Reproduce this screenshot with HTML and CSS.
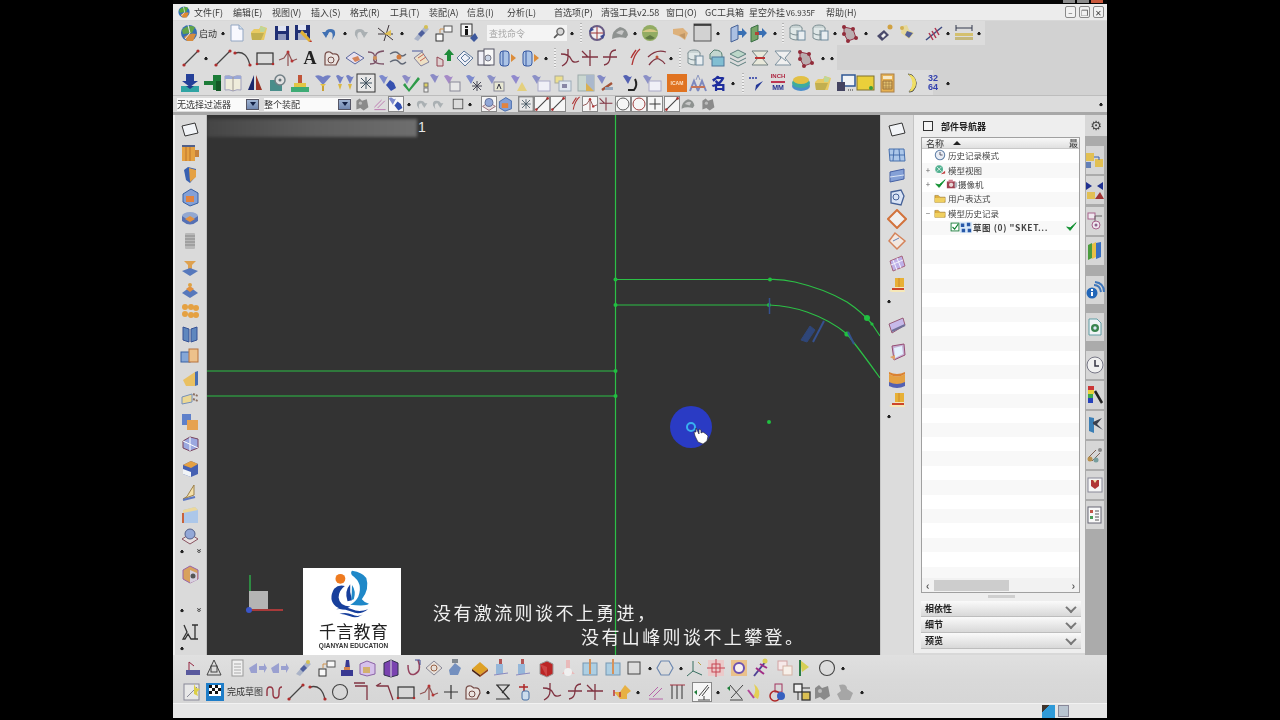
FILE: index.html
```html
<!DOCTYPE html>
<html lang="zh">
<head>
<meta charset="utf-8">
<title>NX</title>
<link rel="stylesheet" href="styles.css">
</head>
<body>
<svg class="sprite" xmlns="http://www.w3.org/2000/svg">
<symbol id="nx" viewBox="0 0 20 20"><circle cx="10" cy="10" r="8" fill="#2f6fc0"/><path d="M3 7q6-6 13-3l-3 6-9 1z" fill="#5aa83c"/><path d="M5 14q6-5 12-3l-3 7H8z" fill="#e08a30"/><path d="M9 2l2 8-5 6" stroke="#e8e8f8" fill="none"/></symbol>
<symbol id="doc" viewBox="0 0 20 20"><path d="M4 2h8l4 4v12H4z" fill="#f8f8ff" stroke="#8fa6c8"/><path d="M12 2v4h4" fill="#cfe0f0" stroke="#8fa6c8"/></symbol>
<symbol id="fold" viewBox="0 0 20 20"><path d="M2 9l3-3h5l2-3 6 2-3 12H3z" fill="#eeca50"/><path d="M2 10h13l-3 7H3z" fill="#c6b040"/><path d="M11 3l6 2-2 4h-4z" fill="#bcd890"/></symbol>
<symbol id="save" viewBox="0 0 20 20"><rect x="3" y="3" width="14" height="14" fill="#1d2f80"/><rect x="6" y="3" width="8" height="5" fill="#dfe4f4"/><rect x="6" y="11" width="8" height="6" fill="#8d98c4"/></symbol>
<symbol id="saveas" viewBox="0 0 20 20"><rect x="2" y="2" width="15" height="15" fill="#1d2f80"/><rect x="5" y="2" width="8" height="5" fill="#dfe4f4"/><rect x="5" y="10" width="9" height="7" fill="#a8b0d0"/><path d="M9 7l9 10-2 2-9-9z" fill="#e8b020"/><path d="M16 19l2-2 1 2z" fill="#d03020"/></symbol>
<symbol id="undo" viewBox="0 0 20 20"><path d="M5 11q0-5 6-5 5 0 4 6l-3 5q2-8-2-8-2 0-2 3z" fill="#3a72c0"/><path d="M2 9l7 0-3 6z" fill="#3a72c0"/></symbol>
<symbol id="redo" viewBox="0 0 20 20"><path d="M15 11q0-5-6-5-5 0-4 6l3 5q-2-8 2-8 2 0 2 3z" fill="#a9b0b4"/><path d="M18 9h-7l3 6z" fill="#a9b0b4"/></symbol>
<symbol id="snap" viewBox="0 0 20 20"><path d="M2 5l15 12M8 18L13 2M2 11h15" stroke="#40363a" fill="none"/><path d="M8 11l7-4v6z" fill="#e8c040"/></symbol>
<symbol id="pen" viewBox="0 0 20 20"><path d="M3 16L14 3l4 3L7 18z" fill="#aab4cc"/><path d="M7 11l4-4 3 3-4 4z" fill="#4a5fa8"/><circle cx="15" cy="4" r="2" fill="#d8c040"/></symbol>
<symbol id="cop" viewBox="0 0 20 20"><rect x="2" y="11" width="7" height="7" fill="#f8f8f8" stroke="#333"/><rect x="10" y="3" width="8" height="6" fill="#f8f8f8" stroke="#555"/><path d="M6 10V6h4" stroke="#d89040" fill="none"/></symbol>
<symbol id="info" viewBox="0 0 20 20"><rect x="2" y="1" width="11" height="12" fill="#f4f4f4" stroke="#333"/><rect x="6" y="3" width="3" height="2" fill="#111"/><rect x="6" y="6" width="3" height="6" fill="#111"/><path d="M11 15l5-5 3 5-4 4z" fill="#3858a8"/></symbol>
<symbol id="mag" viewBox="0 0 20 20"><circle cx="12" cy="8" r="5" fill="#d8d8d8" stroke="#666" stroke-width="2"/><path d="M8 12l-5 5" stroke="#555" stroke-width="2.5"/></symbol>
<symbol id="orb" viewBox="0 0 20 20"><circle cx="10" cy="10" r="7" fill="#f0f0f4" stroke="#6a5a8a" stroke-width="2"/><path d="M10 4v12M4 10h12" stroke="#b03030"/><path d="M2 9l2-5 3 3zM18 11l-2 5-3-3z" fill="#3a4aa0"/></symbol>
<symbol id="shd" viewBox="0 0 20 20"><path d="M2 16q0-9 8-12 7 1 8 8l-2 3q-8-2-14 1z" fill="#8e9290"/><path d="M6 10q4-4 8-2l-2 4z" fill="#c8c8c8"/></symbol>
<symbol id="sph" viewBox="0 0 20 20"><circle cx="10" cy="10" r="8" fill="#8fae58"/><path d="M2 9q8-6 16 0z" fill="#d8c878"/><path d="M5 15q5 3 10 0l-5-3z" fill="#5d7c3c"/></symbol>
<symbol id="blob" viewBox="0 0 20 20"><path d="M3 6l10-1 5 5-3 7-6-4-6-2z" fill="#e4b070"/><path d="M9 12l6-2 0 6z" fill="#c8965c"/></symbol>
<symbol id="gbox" viewBox="0 0 20 20"><rect x="1" y="1" width="17" height="17" fill="#d2d2d2" stroke="#555"/><path d="M1 2h17" stroke="#222" stroke-width="1.5"/></symbol>
<symbol id="door" viewBox="0 0 20 20"><path d="M3 5l7-3v14l-7 3z" fill="#a8c0e8" stroke="#4060a0"/><path d="M10 8h4V5l5 5-5 5v-3h-4z" fill="#3070c0"/></symbol>
<symbol id="doorg" viewBox="0 0 20 20"><path d="M2 5l7-3v14l-7 3z" fill="#70a860" stroke="#307040"/><path d="M9 8h4V5l5 5-5 5v-3H9z" fill="#3070c0"/><path d="M6 9h4v3H6z" fill="#c04030"/></symbol>
<symbol id="stk" viewBox="0 0 20 20"><ellipse cx="9" cy="5" rx="6" ry="3" fill="#c8d4d4" stroke="#7a8f94"/><path d="M3 5v10q6 4 12 0V5" fill="#dfe8e8" stroke="#7a8f94"/><path d="M3 10q6 4 12 0M10 7v10" stroke="#7a8f94" fill="none"/><rect x="11" y="8" width="7" height="9" fill="#e8eef2" stroke="#6a8aa0"/></symbol>
<symbol id="net" viewBox="0 0 20 20"><path d="M4 4l9 2 3 9-8 3-4-7z" fill="#bcaeb0" stroke="#a03048"/><g fill="#a02838"><circle cx="4" cy="4" r="2"/><circle cx="13" cy="6" r="2"/><circle cx="16" cy="15" r="2"/><circle cx="8" cy="18" r="2"/><circle cx="4" cy="11" r="2"/></g></symbol>
<symbol id="gem" viewBox="0 0 20 20"><path d="M2 13l7-6 5 5-7 6z" fill="#4a4a70"/><path d="M6 13l3-3 2 2-3 3z" fill="#f0f0f0"/><circle cx="15" cy="4" r="2.5" fill="#d8a030"/></symbol>
<symbol id="gem2" viewBox="0 0 20 20"><path d="M5 3l5-1 2 5 5 3-5 6-8-6z" fill="#e8d890"/><path d="M10 8l6 2-4 5-4-3z" fill="#5060a0"/><circle cx="5" cy="5" r="2" fill="#d8b040"/></symbol>
<symbol id="spr" viewBox="0 0 20 20"><path d="M2 17L18 4" stroke="#3a4a8a" stroke-width="1.5"/><path d="M5 10l4 7M8 8l4 7M11 5l4 7" stroke="#c03050" stroke-width="1.5"/></symbol>
<symbol id="dim" viewBox="0 0 20 20"><path d="M2 5h16M2 2v6M18 2v6" stroke="#303850"/><rect x="1" y="10" width="18" height="3" fill="#d8c060"/><rect x="1" y="14" width="18" height="3" fill="#c8b870"/></symbol>
<symbol id="ln" viewBox="0 0 20 20"><path d="M3 17L17 3" stroke="#444" stroke-width="1.3"/><circle cx="3" cy="17" r="1.6" fill="#c02828"/><circle cx="17" cy="3" r="1.6" fill="#c02828"/></symbol>
<symbol id="arc" viewBox="0 0 20 20"><path d="M2 5q12-3 15 13" stroke="#444" fill="none" stroke-width="1.3"/><circle cx="2" cy="5" r="1.6" fill="#c02828"/><circle cx="17" cy="17" r="1.6" fill="#c02828"/></symbol>
<symbol id="rct" viewBox="0 0 20 20"><rect x="2" y="5" width="16" height="11" fill="none" stroke="#333" stroke-width="1.2"/><circle cx="2" cy="16" r="1.3" fill="#c02828"/><circle cx="18" cy="16" r="1.3" fill="#c02828"/></symbol>
<symbol id="spl" viewBox="0 0 20 20"><path d="M1 12l5-2 4-6 4 9 5-2M10 4v14" stroke="#995050" fill="none" stroke-width="1.2"/><circle cx="10" cy="4" r="1.5" fill="#c83030"/><circle cx="14" cy="13" r="1.5" fill="#c83030"/></symbol>
<symbol id="hrt" viewBox="0 0 20 20"><path d="M4 17V8q0-5 5-4l3 2q6-1 6 5l-3 6z" fill="#ece4e0" stroke="#7a4a44" stroke-width="1.2"/><circle cx="10" cy="12" r="3" fill="none" stroke="#7a4a44"/></symbol>
<symbol id="wng" viewBox="0 0 20 20"><path d="M1 10l8-6 10 6-9 6z" fill="#e8e0f0" stroke="#5868a8"/><path d="M7 10l6-2 2 4-5 2z" fill="#e08050"/></symbol>
<symbol id="cv1" viewBox="0 0 20 20"><path d="M2 4q8 0 6 6t10 6M4 16q8 0 6-6t8-7" stroke="#805068" fill="none" stroke-width="1.3"/><circle cx="9" cy="10" r="2" fill="#d89050"/></symbol>
<symbol id="cv2" viewBox="0 0 20 20"><path d="M2 6q6-4 9 0t7 0M2 14q6-4 9 0t7 0" stroke="#606878" fill="none" stroke-width="1.3"/><circle cx="11" cy="9" r="2.5" fill="#e07830"/></symbol>
<symbol id="rai" viewBox="0 0 20 20"><path d="M3 10l8-6 7 10-8 4z" fill="#f0e0c0" stroke="#8080a0"/><path d="M7 10l6-4M9 13l6-4" stroke="#d06050"/><path d="M1 3h11" stroke="#4858a8"/></symbol>
<symbol id="arb" viewBox="0 0 20 20"><path d="M2 9l6 3v6H2z" fill="#e0d0d0" stroke="#a04050"/><path d="M14 1l5 6h-3v6h-4V7H9z" fill="#109030"/></symbol>
<symbol id="rot" viewBox="0 0 20 20"><path d="M2 10l7-7 9 7-8 8z" fill="#eef0f8" stroke="#5878a0"/><path d="M6 10l4-4 5 4-5 4z" fill="none" stroke="#5878a0"/></symbol>
<symbol id="dc3" viewBox="0 0 20 20"><rect x="2" y="3" width="12" height="14" fill="#f0f0f8" stroke="#445"/><rect x="8" y="1" width="10" height="16" fill="#f8f8f8" stroke="#556"/><circle cx="12" cy="10" r="3" fill="#c8d4e8" stroke="#778"/></symbol>
<symbol id="cyl" viewBox="0 0 20 20"><rect x="2" y="3" width="9" height="15" rx="3" fill="#a8c4ec" stroke="#3058b0"/><path d="M13 6l5 4-5 4z" fill="#e88a28"/><path d="M5 3v15" stroke="#3058b0"/></symbol>
<symbol id="trm" viewBox="0 0 20 20"><path d="M1 6q8 0 10 5t8 2M8 1v8q0 6-6 9" stroke="#8a3040" fill="none" stroke-width="1.3"/></symbol>
<symbol id="tr2" viewBox="0 0 20 20"><path d="M2 9h16M10 2v16M2 3l6 6" stroke="#8a3040" fill="none" stroke-width="1.3"/></symbol>
<symbol id="tr3" viewBox="0 0 20 20"><path d="M4 17q6-1 6-8t6-7M3 9h14" stroke="#8a3040" fill="none" stroke-width="1.3"/></symbol>
<symbol id="tr4" viewBox="0 0 20 20"><path d="M17 1q-6 5-8 16M13 2q-3 4-5 8" stroke="#c03030" fill="none" stroke-width="1.3"/></symbol>
<symbol id="crv" viewBox="0 0 20 20"><path d="M1 9q8-8 18-5M2 17q6-8 10-6t6 5" stroke="#8a3040" fill="none" stroke-width="1.3"/><circle cx="10" cy="9" r="1.5" fill="#d05030"/></symbol>
<symbol id="lyr" viewBox="0 0 20 20"><path d="M10 2l8 4-8 4-8-4z" fill="#b8d8c8" stroke="#5a8080"/><path d="M2 10l8 4 8-4M2 14l8 4 8-4" stroke="#5a8080" fill="none"/></symbol>
<symbol id="lyg" viewBox="0 0 20 20"><path d="M8 2q8 0 8 5v4H4V6z" fill="#c0d8d0" stroke="#508070"/><rect x="6" y="9" width="12" height="9" fill="#78c0d8" stroke="#4878a0"/></symbol>
<symbol id="hrg" viewBox="0 0 20 20"><path d="M2 3h16l-6 7 6 7H2l6-7z" fill="#e8e8d8" stroke="#708080"/><path d="M5 10h10" stroke="#d03030" stroke-width="2"/></symbol>
<symbol id="hrw" viewBox="0 0 20 20"><path d="M2 3h16l-6 7 6 7H2l6-7z" fill="#f0f0f0" stroke="#7890a0"/><path d="M7 8l6 5" stroke="#7890a0"/></symbol>
<symbol id="dwn" viewBox="0 0 20 20"><path d="M6 1h8v7h4l-8 6-8-6h4z" fill="#2040a8"/><rect x="1" y="13" width="18" height="6" fill="#20a8a8"/><path d="M6 13h8l-4 3z" fill="#1c3c98"/></symbol>
<symbol id="ham" viewBox="0 0 20 20"><rect x="10" y="2" width="8" height="15" fill="#108030"/><rect x="1" y="8" width="11" height="4" fill="#108030"/><rect x="13" y="8" width="5" height="10" fill="#0a5a20"/></symbol>
<symbol id="bok" viewBox="0 0 20 20"><path d="M2 3q4-1 8 1 4-2 8-1v14q-4-1-8 1-4-2-8-1z" fill="#f0ecd8" stroke="#a0a0c0"/><path d="M2 3q4-1 8 1 4-2 8-1v3H2z" fill="#98a8e0"/><path d="M10 4v14" stroke="#a09890"/></symbol>
<symbol id="sal" viewBox="0 0 20 20"><path d="M9 2L3 17h6z" fill="#182878"/><path d="M11 2l6 15h-6z" fill="#a83020"/></symbol>
<symbol id="gea" viewBox="0 0 20 20"><rect x="2" y="7" width="12" height="11" fill="#40908c"/><circle cx="12" cy="7" r="5" fill="#e0e0e0" stroke="#708088" stroke-width="1.5"/><circle cx="12" cy="7" r="1.5" fill="#607078"/></symbol>
<symbol id="prs" viewBox="0 0 20 20"><rect x="1" y="14" width="18" height="5" fill="#30b070"/><path d="M4 14v-4h12v4z" fill="#e8c830"/><rect x="8" y="2" width="4" height="8" fill="#d05030"/></symbol>
<symbol id="hy1" viewBox="0 0 20 20"><path d="M2 3q4-2 8 1 4-3 8-1l-8 9z" fill="#7080d0"/><path d="M7 11h6l-3 3z" fill="#e8c030"/><rect x="9" y="13" width="2" height="5" fill="#d0a020"/></symbol>
<symbol id="hy2" viewBox="0 0 20 20"><path d="M1 3q2-2 4 0t4 0l-4 8zM11 3q2-2 4 0t4 0l-4 8z" fill="#7080d0"/><path d="M3 11h4l-2 6zM13 11h4l-2 6z" fill="#e0b830"/></symbol>
<symbol id="brd" viewBox="0 0 20 20"><rect x="1" y="1" width="18" height="18" fill="#e8e8e8" stroke="#333"/><path d="M4 10h12M10 4v12M5 5l10 10M15 5L5 15" stroke="#3a5060"/></symbol>
<symbol id="hb" viewBox="0 0 20 20"><path d="M1 3q3-2 5 0t4 0l-4 8z" fill="#7a8ad8"/><path d="M8 12l4-5 4 3 2 5-5 3z" fill="#3050c0"/></symbol>
<symbol id="hck" viewBox="0 0 20 20"><path d="M1 3q3-2 5 0t4 0l-4 8z" fill="#8a8ad0"/><path d="M4 10l4 6L17 4l2 2L8 19 2 12z" fill="#20a040"/></symbol>
<symbol id="hsm" viewBox="0 0 20 20"><path d="M9 2q3-2 5 0t4 0l-4 8z" fill="#8a8ad0"/><rect x="3" y="10" width="4" height="4" fill="#e0d050" stroke="#777"/><rect x="3" y="15" width="4" height="4" fill="#f0f0f0" stroke="#777"/></symbol>
<symbol id="hfr" viewBox="0 0 20 20"><path d="M1 3q3-2 5 0t4 0l-4 8z" fill="#a888d0"/><rect x="7" y="9" width="10" height="9" fill="#e8e8e8" stroke="#889"/></symbol>
<symbol id="hst" viewBox="0 0 20 20"><path d="M1 3q3-2 5 0t4 0l-4 8z" fill="#7a8ad8"/><path d="M12 8v10M7 13h10M8 9l8 8M16 9l-8 8" stroke="#445"/></symbol>
<symbol id="ha" viewBox="0 0 20 20"><path d="M1 3q3-2 5 0t4 0l-4 8z" fill="#8a90d0"/><rect x="8" y="9" width="10" height="9" fill="#e8e8d0" stroke="#889"/><path d="M11 16l2-5 2 5" stroke="#334" fill="none"/></symbol>
<symbol id="hb2" viewBox="0 0 20 20"><path d="M1 3q3-2 5 0t4 0l-4 8z" fill="#9088d8"/><path d="M7 18l5-9 5 9z" fill="#e8d070"/></symbol>
<symbol id="hwt" viewBox="0 0 20 20"><path d="M1 3q3-2 5 0t4 0l-4 8z" fill="#8a90d0"/><rect x="7" y="8" width="12" height="10" fill="#f0f0f8" stroke="#aac"/></symbol>
<symbol id="sqy" viewBox="0 0 20 20"><rect x="2" y="3" width="8" height="7" fill="#f0e080" stroke="#aa9"/><rect x="6" y="8" width="12" height="10" fill="#e0e8f0" stroke="#9ab"/><rect x="9" y="11" width="5" height="4" fill="#88a"/></symbol>
<symbol id="sqc" viewBox="0 0 20 20"><rect x="2" y="2" width="16" height="16" fill="#c8d8d0" stroke="#9aa"/><path d="M10 2h8v16h-8z" fill="#a8b8d0"/><path d="M10 10l8 8h-8z" fill="#e0b040"/></symbol>
<symbol id="hbr" viewBox="0 0 20 20"><path d="M1 3q3-2 5 0t4 0l-4 8z" fill="#8088d0"/><path d="M6 17l10-7" stroke="#b05030" stroke-width="2.5"/><rect x="9" y="14" width="8" height="3" fill="#90a8c0"/></symbol>
<symbol id="hcu" viewBox="0 0 20 20"><path d="M3 3q3-2 5 0t4 0l-4 8z" fill="#5060c0"/><path d="M15 6q3 6-1 11h-6" stroke="#222" stroke-width="2" fill="none"/></symbol>
<symbol id="fnt" viewBox="0 0 20 20"><path d="M2 18l4-10 4 10M10 18l4-10 4 10" stroke="#7a88c8" stroke-width="2" fill="none"/><path d="M3 14h14" stroke="#d07050" stroke-width="2"/><path d="M8 7l2-5 2 5" stroke="#8a98c8" fill="none"/></symbol>
<symbol id="arw" viewBox="0 0 20 20"><path d="M4 10l6 2 7-4-8 10 1-6-6-2z" fill="#2038a8"/><path d="M3 5h8" stroke="#5060c0" stroke-width="2" stroke-dasharray="2 1"/></symbol>
<symbol id="lyb" viewBox="0 0 20 20"><ellipse cx="10" cy="13" rx="9" ry="5" fill="#4090d8"/><ellipse cx="10" cy="10" rx="9" ry="5" fill="#30b0a0"/><ellipse cx="10" cy="7" rx="8" ry="4" fill="#e8c030"/></symbol>
<symbol id="scr" viewBox="0 0 20 20"><rect x="6" y="2" width="13" height="11" fill="#f0f4f8" stroke="#2858a0" stroke-width="1.5"/><rect x="1" y="9" width="8" height="9" fill="#446" /><path d="M12 17h6" stroke="#333" stroke-dasharray="1 1"/></symbol>
<symbol id="not" viewBox="0 0 20 20"><rect x="1" y="3" width="17" height="14" fill="#f0d020" stroke="#807020"/><circle cx="15" cy="15" r="2" fill="#30a030"/></symbol>
<symbol id="cal" viewBox="0 0 20 20"><rect x="3" y="1" width="13" height="18" fill="#f0b040" stroke="#b08040"/><rect x="5" y="3" width="9" height="3" fill="#f8e8c0"/><path d="M5 8h9v8H5z" fill="#e8c060" stroke="#a07030"/><path d="M8 8v8M11 8v8M5 11h9M5 14h9" stroke="#a07030" stroke-width=".6"/></symbol>
<symbol id="moo" viewBox="0 0 20 20"><path d="M7 1q11 8 1 18 2 0 4-1 7-8-1-16z" fill="#f0d830" stroke="#555"/><path d="M7 1q8 8 1 18 7-3 7-9 0-7-8-9z" fill="#f4e050"/></symbol>
<symbol id="t1" viewBox="0 0 20 20"><path d="M6 4v9h10M6 13l-3 3M6 4l5 4" stroke="#a02040" fill="none"/><rect x="3" y="12" width="14" height="5" fill="#5858a8"/></symbol>
<symbol id="t2" viewBox="0 0 20 20"><path d="M10 2L3 17M3 17h14M10 2l7 15" stroke="#444" fill="none"/><rect x="7" y="8" width="6" height="6" fill="none" stroke="#444"/></symbol>
<symbol id="t3" viewBox="0 0 20 20"><rect x="4" y="2" width="11" height="16" fill="#f0f0f0" stroke="#999"/><path d="M6 6h7M6 9h7M6 12h7M6 15h7" stroke="#aaa"/></symbol>
<symbol id="al" viewBox="0 0 20 20"><path d="M9 5v10H3l-2-5zM11 8h5V5l3 5-3 5v-3h-5z" fill="#98a0d8"/></symbol>
<symbol id="ar" viewBox="0 0 20 20"><path d="M11 5v10h6l2-5zM9 8H4V5l-3 5 3 5v-3h5z" fill="#98a0d8" transform="matrix(-1 0 0 1 20 0)"/></symbol>
<symbol id="sta" viewBox="0 0 20 20"><path d="M9 2h3l1 8h-5z" fill="#3838a0"/><rect x="4" y="12" width="12" height="6" fill="#3838a0"/><rect x="7" y="9" width="6" height="3" fill="#e08040"/></symbol>
<symbol id="hs2" viewBox="0 0 20 20"><path d="M3 6l7-3 8 3v10l-8 2-7-2z" fill="#d8c0f0" stroke="#9060b0"/><rect x="6" y="9" width="7" height="6" fill="#d8b060"/></symbol>
<symbol id="pur" viewBox="0 0 20 20"><path d="M3 5l7-3 7 3v12l-7 2-7-2z" fill="#8040c0" stroke="#303050"/><path d="M10 2v17" stroke="#ddd"/></symbol>
<symbol id="hks" viewBox="0 0 20 20"><path d="M4 7q0 12 7 9t3-14" stroke="#a04060" fill="none" stroke-width="1.5"/><path d="M11 2h5v5" stroke="#3848a0" fill="none"/></symbol>
<symbol id="rhm" viewBox="0 0 20 20"><path d="M2 10l8-7 8 7-8 7z" fill="#e8e0d8" stroke="#889"/><circle cx="10" cy="10" r="3" fill="none" stroke="#a06040"/></symbol>
<symbol id="lmp" viewBox="0 0 20 20"><rect x="7" y="1" width="6" height="4" fill="#808890"/><path d="M4 12l6-7 6 5-3 7H5z" fill="#7090c8"/></symbol>
<symbol id="ytb" viewBox="0 0 20 20"><path d="M2 11l8-7 8 7-8 6z" fill="#e8a010"/><path d="M2 11l8 6v2l-8-6z" fill="#502010"/><path d="M18 11l-8 6v2l8-6z" fill="#a04010"/></symbol>
<symbol id="tub" viewBox="0 0 20 20"><rect x="5" y="6" width="7" height="10" fill="#90b8e0"/><path d="M8 1h3v5H8z" fill="#c05050"/><path d="M3 17l14-2" stroke="#8888c8"/></symbol>
<symbol id="red" viewBox="0 0 20 20"><path d="M4 6l7-3 6 3v10l-6 3-7-3z" fill="#d02020" stroke="#999"/><path d="M4 6l7 3v10" fill="#e04040"/></symbol>
<symbol id="pnk" viewBox="0 0 20 20"><path d="M8 2h4v9l5 5H4l4-5z" fill="#f0b8b8"/><circle cx="10" cy="14" r="4" fill="#f0f0f0"/></symbol>
<symbol id="box" viewBox="0 0 20 20"><rect x="3" y="5" width="14" height="12" fill="#a8d0e8" stroke="#7098b8"/><path d="M10 1v15" stroke="#e09050" stroke-width="2"/></symbol>
<symbol id="sq" viewBox="0 0 20 20"><rect x="4" y="4" width="12" height="12" fill="none" stroke="#444"/></symbol>
<symbol id="hex" viewBox="0 0 20 20"><path d="M6 3h8l4 7-4 7H6l-4-7z" fill="none" stroke="#6888b8" stroke-width="1.2"/></symbol>
<symbol id="axs" viewBox="0 0 20 20"><path d="M8 3v10l9 4M8 13L2 18" stroke="#307060" fill="none"/><path d="M13 4l3 3" stroke="#c0a030"/></symbol>
<symbol id="rcr" viewBox="0 0 20 20"><rect x="2" y="2" width="16" height="16" fill="#f0c8c8"/><path d="M10 1v18M1 10h18" stroke="#d84050"/><rect x="6" y="6" width="8" height="8" fill="none" stroke="#d84050"/></symbol>
<symbol id="ora" viewBox="0 0 20 20"><rect x="2" y="2" width="16" height="16" fill="#f0c080"/><circle cx="10" cy="10" r="5" fill="#f8f0f0" stroke="#7050c0" stroke-width="2"/></symbol>
<symbol id="tre" viewBox="0 0 20 20"><path d="M3 18L15 3" stroke="#5040a0" stroke-width="2"/><path d="M9 6l7 4M5 10l8 6" stroke="#b02890" stroke-width="2"/><circle cx="14" cy="3" r="2.5" fill="#e0d040"/></symbol>
<symbol id="pks" viewBox="0 0 20 20"><rect x="3" y="3" width="9" height="9" fill="#f8e8e8" stroke="#d8a0a0"/><rect x="8" y="8" width="9" height="9" fill="#f8f0e8" stroke="#d8b0a0"/></symbol>
<symbol id="flg" viewBox="0 0 20 20"><path d="M5 2l9 7-7 5z" fill="#d8d040"/><path d="M5 2v16" stroke="#208040" stroke-width="2"/></symbol>
<symbol id="cir" viewBox="0 0 20 20"><circle cx="10" cy="10" r="7.5" fill="none" stroke="#444" stroke-width="1.1"/></symbol>
<symbol id="cir2" viewBox="0 0 20 20"><circle cx="10" cy="10" r="7.5" fill="none" stroke="#a02020" stroke-width="1.1"/></symbol>
<symbol id="flag" viewBox="0 0 20 20"><rect x="1" y="1" width="18" height="18" fill="#1080d8"/><rect x="4" y="3" width="12" height="11" fill="#fff"/><path d="M4 3h3v3H4zM10 3h3v3h-3zM7 6h3v3H7zM13 6h3v3h-3zM4 9h3v3H4zM10 9h3v3h-3z" fill="#111"/></symbol>
<symbol id="skt" viewBox="0 0 20 20"><rect x="2" y="2" width="15" height="16" fill="#e8e8e8" stroke="#889"/><path d="M5 15L15 5" stroke="#889"/><path d="M12 2l2 4 4 1-3 3 1 4-4-2z" fill="#e0d030"/></symbol>
<symbol id="wav" viewBox="0 0 20 20"><path d="M2 14V9q0-4 3-4t3 4v3q0 4 3 4t3-4V9q0-4 3-4" stroke="#a03040" fill="none" stroke-width="1.4"/></symbol>
<symbol id="ang" viewBox="0 0 20 20"><path d="M2 4h12v14M1 1h11" stroke="#8a3040" fill="none" stroke-width="1.3"/></symbol>
<symbol id="ang2" viewBox="0 0 20 20"><path d="M2 4h11l5 14M1 4l5-3" stroke="#8a3040" fill="none" stroke-width="1.3"/></symbol>
<symbol id="pls" viewBox="0 0 20 20"><path d="M10 3v14M3 10h14" stroke="#333" stroke-width="1.2"/></symbol>
<symbol id="tft" viewBox="0 0 20 20"><path d="M3 3h14M3 17h14M4 3l12 14M16 3L9 11" stroke="#333" fill="none" stroke-width="1.2"/></symbol>
<symbol id="cyr" viewBox="0 0 20 20"><path d="M8 2v8M3 5h9" stroke="#c02020" stroke-width="1.5"/><rect x="6" y="9" width="7" height="9" rx="2" fill="#c8dcf0" stroke="#4070b0"/></symbol>
<symbol id="ora2" viewBox="0 0 20 20"><path d="M1 10h6l5-7 6 6-4 3v5H7z" fill="#f0b030"/><path d="M1 8v6M7 10v5" stroke="#d03030" stroke-width="1.5"/></symbol>
<symbol id="prl" viewBox="0 0 20 20"><path d="M3 14L12 5M7 15l9-9M3 17h14" stroke="#c060b0" fill="none"/></symbol>
<symbol id="col" viewBox="0 0 20 20"><path d="M4 3v14M9 3v14M14 3v14" stroke="#333"/><path d="M2 3h15" stroke="#b03040"/></symbol>
<symbol id="par" viewBox="0 0 20 20"><path d="M2 10l3-2v5z" fill="#108030"/><path d="M7 14L16 3M10 14l7-9M6 18h12M12 14v4" stroke="#444" fill="none"/></symbol>
<symbol id="xpr" viewBox="0 0 20 20"><path d="M2 6l3-2v5z" fill="#108030"/><path d="M6 16L18 3M5 3l12 14M5 18h13" stroke="#444" fill="none"/></symbol>
<symbol id="yel" viewBox="0 0 20 20"><path d="M9 2q8 6 4 15l-5-3q4-4 1-12z" fill="#e8d040"/><path d="M3 8l6 8" stroke="#c040a0" stroke-width="2"/></symbol>
<symbol id="rbl" viewBox="0 0 20 20"><rect x="8" y="2" width="7" height="8" fill="none" stroke="#b03060"/><circle cx="8" cy="14" r="5" fill="none" stroke="#c02020" stroke-width="1.5"/><circle cx="14" cy="14" r="4" fill="#3060d0"/></symbol>
<symbol id="lnk" viewBox="0 0 20 20"><rect x="2" y="2" width="8" height="8" fill="#f0f0f0" stroke="#333" stroke-width="1.3"/><rect x="10" y="10" width="8" height="8" fill="#e0c040" stroke="#333" stroke-width="1.3"/><path d="M10 6h8M6 10v8" stroke="#333"/></symbol>
<symbol id="gr1" viewBox="0 0 20 20"><path d="M3 6l4-3 3 3 6-2 2 10-6 4-4-3-5 2z" fill="#8a8a8a"/><circle cx="8" cy="9" r="2" fill="#bbb"/></symbol>
<symbol id="gr2" viewBox="0 0 20 20"><path d="M4 3q8-2 8 4l6 4-3 7H5l-3-6 4-3z" fill="#a6a6a6"/></symbol>
<symbol id="lbx" viewBox="0 0 20 20"><path d="M2 6l13-3 3 10-13 3z" fill="#f2f4f8" stroke="#333"/></symbol>
<symbol id="so1" viewBox="0 0 20 20"><rect x="2" y="3" width="13" height="15" fill="#f0a030"/><path d="M6 3v15M10 3v15" stroke="#c8701c"/><path d="M15 7h4v7h-4z" fill="#d08030"/><path d="M2 3h13" stroke="#506090" stroke-width="2"/></symbol>
<symbol id="so2" viewBox="0 0 20 20"><path d="M4 5l4-3 8 2v7l-6 7-4-3z" fill="#3060c0"/><path d="M9 3l7 2v7l-6 5z" fill="#f0a030"/></symbol>
<symbol id="so3" viewBox="0 0 20 20"><path d="M3 7l8-5 7 4v10l-8 3-7-4z" fill="#80a0e0" stroke="#3060b0"/><rect x="6" y="9" width="8" height="6" fill="#f08030"/></symbol>
<symbol id="so4" viewBox="0 0 20 20"><ellipse cx="10" cy="7" rx="8" ry="4" fill="#90a8d8"/><path d="M2 7v5q8 7 16 0V7q-8 7-16 0z" fill="#5070c0"/><path d="M5 10l5-3 5 3-5 3z" fill="#f09030"/></symbol>
<symbol id="so5" viewBox="0 0 20 20"><rect x="5" y="2" width="10" height="16" rx="1" fill="#b8b8b8"/><path d="M5 5h10M5 8h10M5 11h10M5 14h10" stroke="#888"/></symbol>
<symbol id="so6" viewBox="0 0 20 20"><path d="M4 3h12l-4 4v5H8V7z" fill="#e8a040"/><path d="M2 13l8-3 8 3-8 5z" fill="#5078c8"/></symbol>
<symbol id="so7" viewBox="0 0 20 20"><path d="M2 13l8-6 8 6-8 5z" fill="#5078c8"/><path d="M6 9l4-3 4 3-4 3z" fill="#f09030"/><circle cx="10" cy="5" r="2" fill="#e8a030"/></symbol>
<symbol id="so8" viewBox="0 0 20 20"><g fill="#f0a030"><circle cx="5" cy="5" r="3"/><circle cx="11" cy="5" r="3"/><circle cx="16" cy="6" r="3"/><circle cx="5" cy="12" r="3"/><circle cx="11" cy="13" r="3"/><circle cx="16" cy="13" r="3"/></g></symbol>
<symbol id="so9" viewBox="0 0 20 20"><path d="M3 3l6 2v13l-6-2zM17 3l-6 2v13l6-2z" fill="#5888c8" stroke="#3050a0"/></symbol>
<symbol id="s10" viewBox="0 0 20 20"><rect x="1" y="6" width="9" height="10" fill="#80a8e0" stroke="#3060b0"/><rect x="9" y="3" width="9" height="13" fill="#f4c080" stroke="#c07030"/></symbol>
<symbol id="s11" viewBox="0 0 20 20"><path d="M3 12l12-8v14H6z" fill="#f0c050"/><path d="M15 4l3-1v14l-3 1z" fill="#4070c0"/></symbol>
<symbol id="s12" viewBox="0 0 20 20"><path d="M2 8l10-3v8L2 15z" fill="#f0d888" stroke="#7090c0"/><path d="M13 5l5 2M13 10l5 2" stroke="#907060" stroke-width="2" stroke-dasharray="2 1"/></symbol>
<symbol id="s13" viewBox="0 0 20 20"><rect x="2" y="2" width="9" height="11" fill="#5880d8"/><rect x="7" y="8" width="11" height="10" fill="#f0a040"/></symbol>
<symbol id="s14" viewBox="0 0 20 20"><path d="M3 7l7-4 8 2v9l-8 3-7-3z" fill="#98a8e8" stroke="#804060"/><path d="M10 3v14M3 7l15 7" stroke="#fff"/></symbol>
<symbol id="s15" viewBox="0 0 20 20"><path d="M3 6l8-4 7 3v10l-7 3-8-3z" fill="#4060c0"/><path d="M3 6l8 3 7-4-7-3z" fill="#f0a030"/><path d="M3 10l8 3v5l-8-3z" fill="#f0f4f8"/></symbol>
<symbol id="s16" viewBox="0 0 20 20"><path d="M14 2v10L3 16q5-2 6-6z" fill="#f8e0a0" stroke="#a08040"/><path d="M3 17l12-3" stroke="#5878d0" stroke-width="2"/></symbol>
<symbol id="s17" viewBox="0 0 20 20"><path d="M3 5l12-3 3 3v13H3z" fill="#a8c8f0"/><path d="M3 5l12-3 3 3-15 3z" fill="#f0d890"/><path d="M3 8v10" stroke="#d86030" stroke-width="2"/></symbol>
<symbol id="s18" viewBox="0 0 20 20"><path d="M2 13l8-5 8 5-8 5z" fill="#e8e0e0" stroke="#905060"/><circle cx="10" cy="8" r="5" fill="#90a8e0" stroke="#506090"/></symbol>
<symbol id="s19" viewBox="0 0 20 20"><path d="M3 6l7-4 8 4v9l-8 4-7-4z" fill="#e0a050" stroke="#a060b0"/><path d="M10 6l7 3v7l-7 3z" fill="#d8d0e0"/><circle cx="13" cy="12" r="2.5" fill="#555"/></symbol>
<symbol id="s20" viewBox="0 0 20 20"><path d="M4 3l3 7-4 7h2l3-5 3 5h2M15 3v14M12 3h6M12 17h6" stroke="#333" fill="none" stroke-width="1.3"/></symbol>
<symbol id="r1" viewBox="0 0 20 20"><path d="M2 5h15l1 12H3z" fill="#a8c8f0" stroke="#4070b8"/><path d="M7 5l-1 12M12 5l1 12M2 11h16" stroke="#4070b8"/></symbol>
<symbol id="r2" viewBox="0 0 20 20"><path d="M3 7l14-3v10L3 17z" fill="#80a0e0" stroke="#4060b0"/><path d="M3 12l14-2" stroke="#d8e4f8"/></symbol>
<symbol id="r3" viewBox="0 0 20 20"><path d="M4 5l10-2 3 6-3 9-10-2z" fill="#d8e4f8" stroke="#4060a0" stroke-width="1.3"/><circle cx="9" cy="10" r="3" fill="none" stroke="#4060a0"/></symbol>
<symbol id="r4" viewBox="0 0 20 20"><path d="M10 1l9 9-9 9-9-9z" fill="#f0f0f0" stroke="#e07030" stroke-width="2"/></symbol>
<symbol id="r5" viewBox="0 0 20 20"><path d="M8 2l10 8-8 8-8-8z" fill="#f4e8e0" stroke="#e08050" stroke-width="1.5"/><path d="M6 10l6-3" stroke="#6080c0"/></symbol>
<symbol id="r6" viewBox="0 0 20 20"><path d="M3 7l12-5 3 10-12 5z" fill="#c0b0f0" stroke="#b06080"/><path d="M6 6l4 10M10 4l4 10M4 11l12-5" stroke="#f4f4ff"/></symbol>
<symbol id="r7" viewBox="0 0 20 20"><path d="M8 2h9v12H8z" fill="#f0b020"/><path d="M12 2v12" stroke="#d88818"/><path d="M2 15l6-4h9l1 5H5z" fill="#f8e8b0"/><path d="M5 13h12" stroke="#e04020" stroke-width="2"/></symbol>
<symbol id="r8" viewBox="0 0 20 20"><path d="M2 8l14-6 2 7-13 8z" fill="#c8b8f0" stroke="#a05878"/><path d="M5 15l13-6" stroke="#7070a0" stroke-width="2"/></symbol>
<symbol id="r9" viewBox="0 0 20 20"><path d="M5 4l12-2 1 11-11 5z" fill="#c8b0d8" stroke="#a04878"/><path d="M7 6l8-2 1 8-8 4z" fill="#e0f0ff"/><path d="M3 15l5-2v5z" fill="#e8a060"/></symbol>
<symbol id="r10" viewBox="0 0 20 20"><path d="M2 5q8 5 16 0v11q-8 4-16 0z" fill="#f0a030"/><path d="M2 5q8 5 16 0v-2q-8 4-16 0z" fill="#e88020"/><path d="M2 13q8 4 16 0v4q-8 4-16 0z" fill="#5060c0"/></symbol>
<symbol id="tb1" viewBox="0 0 20 20"><rect x="1" y="3" width="8" height="8" fill="#e8c040"/><rect x="10" y="9" width="8" height="8" fill="#e8c040"/><path d="M9 7h5M14 7v3" stroke="#3060c0"/><rect x="1" y="12" width="5" height="6" fill="#6080c0"/></symbol>
<symbol id="tb2" viewBox="0 0 20 20"><path d="M1 2l6 4-6 4zM18 2l-6 4 6 4z" fill="#1c30a0"/><rect x="2" y="12" width="8" height="7" fill="#e8c040"/><path d="M10 19l5-7 4 7z" fill="#b03030"/></symbol>
<symbol id="tb3" viewBox="0 0 20 20"><rect x="3" y="2" width="7" height="6" fill="#f0e8f0" stroke="#b06090"/><path d="M10 5h7M10 5v6" stroke="#666"/><circle cx="11" cy="14" r="4" fill="#f0e8f0" stroke="#b06090"/><circle cx="11" cy="14" r="1.5" fill="#906090"/></symbol>
<symbol id="tb4" viewBox="0 0 20 20"><path d="M3 4l4-2v15l-4 2z" fill="#40a030"/><path d="M7 3l4-2v15l-4 2z" fill="#f0c030"/><path d="M11 2l5-1v15l-5 2z" fill="#3070d0"/></symbol>
<symbol id="tb5" viewBox="0 0 20 20"><circle cx="7" cy="13" r="5.5" fill="#1868c8"/><rect x="6" y="9" width="2" height="2" fill="#fff"/><rect x="6" y="12" width="2" height="4" fill="#fff"/><path d="M9 5q6 0 7 7M10 2q9 1 9 10" stroke="#3878c8" stroke-width="2" fill="none"/></symbol>
<symbol id="tb6" viewBox="0 0 20 20"><path d="M4 2h8l4 4v12H4z" fill="#f0f4f8" stroke="#58a0a8"/><circle cx="10" cy="11" r="4" fill="#308848"/><circle cx="10" cy="11" r="1.7" fill="#d8e8f8"/></symbol>
<symbol id="tb7" viewBox="0 0 20 20"><circle cx="10" cy="10" r="8" fill="#f0f0f0" stroke="#778"/><path d="M10 5v6h4" stroke="#334" stroke-width="1.5" fill="none"/></symbol>
<symbol id="tb8" viewBox="0 0 20 20"><path d="M3 1h6v4H3z" fill="#e03030"/><path d="M3 5h6v4H3z" fill="#f0d020"/><path d="M3 9h5v4H3z" fill="#30b040"/><path d="M3 13h5v5H3z" fill="#2040d0"/><path d="M10 6l7 12" stroke="#222" stroke-width="2.5"/></symbol>
<symbol id="tb9" viewBox="0 0 20 20"><path d="M4 2l5 1v15l-5-2z" fill="#3080c0"/><path d="M8 7l9-4-5 6 6 6-10-6z" fill="#3a4050"/></symbol>
<symbol id="tba" viewBox="0 0 20 20"><path d="M3 13l8-8M7 16l8-8" stroke="#806050"/><circle cx="5" cy="14" r="2.5" fill="#c09040"/><circle cx="15" cy="5" r="2" fill="#888"/><circle cx="11" cy="15" r="2.5" fill="#70a0a0"/></symbol>
<symbol id="tbb" viewBox="0 0 20 20"><rect x="3" y="3" width="14" height="14" fill="#f4f4f4" stroke="#889"/><path d="M6 5h8v6l-4 3-4-3z" fill="#c03030"/><path d="M8 5l2 3 2-3" fill="#f0e0a0"/></symbol>
<symbol id="tbc" viewBox="0 0 20 20"><rect x="3" y="2" width="13" height="16" fill="#f8f8f8" stroke="#667"/><rect x="5" y="5" width="3" height="3" fill="#d05040"/><rect x="5" y="11" width="3" height="3" fill="#40a050"/><path d="M10 6h4M10 9h4M10 12h4M10 15h4" stroke="#555"/></symbol>
<symbol id="clk" viewBox="0 0 14 14"><circle cx="7" cy="7" r="5.5" fill="#e8ecf4" stroke="#6080a8" stroke-width="1.2"/><path d="M7 3.5V7h3" stroke="#445" fill="none"/></symbol>
<symbol id="mdv" viewBox="0 0 14 14"><circle cx="6" cy="6" r="4.5" fill="#50b090"/><path d="M3 3l6 6M9 3l-6 6" stroke="#e0f0e8"/><path d="M8 12l5-4v3z" fill="#c04040"/></symbol>
<symbol id="chk" viewBox="0 0 14 14"><path d="M2 7l4 4 7-9-7 6z" fill="#109030" stroke="#109030"/></symbol>
<symbol id="cam" viewBox="0 0 14 14"><rect x="1" y="4" width="10" height="8" fill="#a04050"/><rect x="3" y="2" width="5" height="3" fill="#d08090"/><circle cx="6" cy="8" r="2.5" fill="#e8d8d8"/><rect x="10" y="5" width="3" height="6" fill="#b0b8c0"/></symbol>
<symbol id="fld" viewBox="0 0 14 14"><path d="M1 4h4l2 2h6v6H1z" fill="#e0b040" stroke="#907020" stroke-width=".6"/><path d="M1 7h12l-1 5H1z" fill="#f0d060"/></symbol>
<symbol id="cbx" viewBox="0 0 14 14"><rect x="1.5" y="1.5" width="11" height="11" fill="#fff" stroke="#208040" stroke-width="1.3"/><path d="M3.5 7l3 3 5-7" stroke="#108030" fill="none" stroke-width="1.5"/></symbol>
<symbol id="skg" viewBox="0 0 14 14"><rect x="0" y="1" width="14" height="13" fill="#d8e8f8"/><path d="M1 3h4v4H1zM8 2h4v4H8zM2 9h4v4H2zM9 9h4v4H9z" fill="#2858a8"/></symbol>
</svg>
<div class="app">
  <div class="topedge"><i class="peek"></i><i class="peek"></i><i class="peek hot"></i></div>
  <div class="menu">
    <svg class="mlogo"><use href="#nx"/></svg>
    <span class="mi w39">文件(F)</span><span class="mi w39">编辑(E)</span><span class="mi w39">视图(V)</span><span class="mi w39">插入(S)</span><span class="mi w40">格式(R)</span><span class="mi w39">工具(T)</span><span class="mi w38">装配(A)</span><span class="mi w40">信息(I)</span><span class="mi w47">分析(L)</span><span class="mi w47">首选项(P)</span><span class="mi w65">清强工具v2.58</span><span class="mi w39">窗口(O)</span><span class="mi w44">GC工具箱</span><span class="mi w37">星空外挂</span><span class="mi w40 ver">V6.935F</span><span class="mi">帮助(H)</span>
    <div class="winbtns"><span class="wb">–</span><span class="wb">❐</span><span class="wb">✕</span></div>
  </div>

  <div class="tb r1"><div class="strip s1">
    <svg class="i m6"><use href="#nx"/></svg><span class="lbl w20">启动</span><b class="c"></b><svg class="i"><use href="#doc"/></svg><svg class="i m2"><use href="#fold"/></svg><svg class="i m3"><use href="#save"/></svg><svg class="i m1"><use href="#saveas"/></svg><svg class="i m7"><use href="#undo"/></svg><b class="c m1"></b><svg class="i m1"><use href="#redo"/></svg><svg class="i m6"><use href="#snap"/></svg><b class="c m2"></b><svg class="i m5"><use href="#pen"/></svg><svg class="i m3"><use href="#cop"/></svg><svg class="i m5"><use href="#info"/></svg>
    <div class="find m8"><span>查找命令</span><svg class="fm"><use href="#mag"/></svg></div><b class="c m1"></b><u class="sep m4"></u><svg class="i m5"><use href="#orb"/></svg><svg class="i m3"><use href="#shd"/></svg><b class="c m1"></b><svg class="i m1"><use href="#sph"/></svg><svg class="i m10"><use href="#blob"/></svg><svg class="i m3"><use href="#gbox"/></svg><b class="c m1"></b><svg class="i m6"><use href="#door"/></svg><svg class="i m1"><use href="#doorg"/></svg><b class="c m2"></b><u class="sep m3"></u><svg class="i m3"><use href="#stk"/></svg><svg class="i m3"><use href="#stk"/></svg><b class="c m1"></b><svg class="i m1"><use href="#net"/></svg><b class="c m2"></b><svg class="i m5"><use href="#gem"/></svg><svg class="i m2"><use href="#gem2"/></svg><svg class="i m7"><use href="#spr"/></svg><b class="c"></b><svg class="i m2"><use href="#dim"/></svg><b class="c m1"></b>
  </div></div>

  <div class="tb r2"><div class="strip s2">
    <svg class="i m8"><use href="#ln"/></svg><b class="c m1"></b><svg class="i m3"><use href="#ln"/></svg><svg class="i"><use href="#arc"/></svg><svg class="i m2"><use href="#rct"/></svg><svg class="i m3"><use href="#spl"/></svg><span class="gi gA m2">A</span><svg class="i m1"><use href="#hrt"/></svg><svg class="i m4"><use href="#wng"/></svg><svg class="i m1"><use href="#cv1"/></svg><svg class="i m2"><use href="#cv2"/></svg><svg class="i m3"><use href="#rai"/></svg><svg class="i m4"><use href="#arb"/></svg><svg class="i"><use href="#rot"/></svg><svg class="i m1"><use href="#dc3"/></svg><svg class="i m2"><use href="#cyl"/></svg><svg class="i m3"><use href="#cyl"/></svg><b class="c m1"></b><u class="sep m4"></u><svg class="i m4"><use href="#trm"/></svg><svg class="i"><use href="#tr2"/></svg><svg class="i"><use href="#tr3"/></svg><svg class="i m3"><use href="#tr4"/></svg><svg class="i m4"><use href="#crv"/></svg><b class="c"></b><u class="sep m4"></u><svg class="i m4"><use href="#stk"/></svg><svg class="i m1"><use href="#lyg"/></svg><svg class="i m2"><use href="#lyr"/></svg><svg class="i m2"><use href="#hrg"/></svg><svg class="i m3"><use href="#hrw"/></svg><svg class="i m3"><use href="#net"/></svg><b class="c m3"></b><b class="c m1"></b>
  </div></div>

  <div class="tb r3"><div class="strip s3">
    <svg class="i m7"><use href="#dwn"/></svg><svg class="i m3"><use href="#ham"/></svg><svg class="i"><use href="#bok"/></svg><svg class="i m2"><use href="#sal"/></svg><svg class="i m3"><use href="#gea"/></svg><svg class="i m2"><use href="#prs"/></svg><svg class="i m3"><use href="#hy1"/></svg><svg class="i m2"><use href="#hy2"/></svg><svg class="i m1"><use href="#brd"/></svg><svg class="i m2"><use href="#hb"/></svg><svg class="i m3"><use href="#hck"/></svg><svg class="i"><use href="#hsm"/></svg><svg class="i m2"><use href="#hfr"/></svg><svg class="i m2"><use href="#hst"/></svg><svg class="i m1"><use href="#ha"/></svg><svg class="i m4"><use href="#hb2"/></svg><svg class="i m1"><use href="#hwt"/></svg><svg class="i m2"><use href="#sqy"/></svg><svg class="i m3"><use href="#sqc"/></svg><svg class="i"><use href="#hbr"/></svg><svg class="i m4"><use href="#hcu"/></svg><svg class="i m2"><use href="#hwt"/></svg><span class="gi gIcam m5">ICAM</span><svg class="i m1"><use href="#fnt"/></svg><span class="gi gName m1">名</span><b class="c"></b><u class="sep m5"></u><svg class="i m2"><use href="#arw"/></svg><span class="gi gInch m2"><span class="in">INCH</span><span class="mm">MM</span></span><svg class="i m3"><use href="#lyb"/></svg><svg class="i m2"><use href="#fold"/></svg><svg class="i m3"><use href="#scr"/></svg><svg class="i"><use href="#not"/></svg><svg class="i m2"><use href="#cal"/></svg><svg class="i m3"><use href="#moo"/></svg><span class="gi gBits m2"><span>32</span><span>64</span></span><b class="c m1"></b>
  </div></div>

  <div class="tb r4">
    <div class="combo m4 cw1"><span>无选择过滤器</span><i class="dd"></i></div><div class="combo m5 cw2"><span>整个装配</span><i class="dd"></i></div>
    <svg class="t m3"><use href="#gr1"/></svg><svg class="t m2"><use href="#prl"/></svg><svg class="t bx"><use href="#hb"/></svg><b class="c m1"></b><svg class="t"><use href="#redo"/></svg><svg class="t"><use href="#redo"/></svg><svg class="t m5"><use href="#sq"/></svg><b class="c"></b><svg class="t m7 bx"><use href="#s18"/></svg><svg class="t"><use href="#so3"/></svg><svg class="t m5 bx"><use href="#brd"/></svg><svg class="t bx"><use href="#ln"/></svg><svg class="t bx"><use href="#ln"/></svg><svg class="t"><use href="#tr4"/></svg><svg class="t bx"><use href="#spl"/></svg><svg class="t"><use href="#tr2"/></svg><svg class="t m1 bx"><use href="#cir"/></svg><svg class="t bx"><use href="#cir2"/></svg><svg class="t bx"><use href="#pls"/></svg><svg class="t m1 bx"><use href="#ln"/></svg><svg class="t"><use href="#shd"/></svg><svg class="t m4"><use href="#gr1"/></svg>
    <b class="c endc"></b>
  </div>

  <div class="main">
    <div class="leftbar">
      <svg class="i t5"><use href="#lbx"/></svg><svg class="i t3"><use href="#so1"/></svg><svg class="i t2"><use href="#so2"/></svg><svg class="i t2"><use href="#so3"/></svg><svg class="i t2"><use href="#so4"/></svg><svg class="i t2"><use href="#so5"/></svg><svg class="i t7"><use href="#so6"/></svg><svg class="i t2"><use href="#so7"/></svg><svg class="i t2"><use href="#so8"/></svg><svg class="i t2"><use href="#so9"/></svg><svg class="i t2"><use href="#s10"/></svg><svg class="i t2"><use href="#s11"/></svg><svg class="i t1"><use href="#s12"/></svg><svg class="i t3"><use href="#s13"/></svg><svg class="i t2"><use href="#s14"/></svg><svg class="i t5"><use href="#s15"/></svg><svg class="i t4"><use href="#s16"/></svg><svg class="i t2"><use href="#s17"/></svg><svg class="i t1"><use href="#s18"/></svg>
      <div class="more t1"><b class="c"></b><span>»</span></div>
      <svg class="i t9"><use href="#s19"/></svg>
      <div class="more t22"><b class="c"></b><span>»</span></div>
      <svg class="i t8"><use href="#s20"/></svg>
      <div class="more t2"><b class="c"></b></div>
    </div>

    <div class="canvas">
      <svg class="scene" viewBox="207 115 673 540">
        <g stroke="#2cc046" fill="none" stroke-width="1.2">
          <path d="M615.5 115V655"/>
          <path d="M207 371H615M207 396H615"/>
          <path d="M615 279.5H770Q782 279 795 282Q825 289 847 302Q862 312 872 324L880 336"/>
          <path d="M615 305H769Q790 306 807 312Q830 320 847 334Q860 350 880 378"/>
        </g>
        <g fill="#20c040"><circle cx="615.5" cy="279.5" r="2"/><circle cx="615.5" cy="305" r="2"/><circle cx="615.5" cy="371" r="2"/><circle cx="615.5" cy="396" r="2"/><circle cx="770" cy="279.5" r="2"/><circle cx="769" cy="305" r="2"/><circle cx="867" cy="318" r="3"/><circle cx="872" cy="324" r="1.6"/><circle cx="847" cy="334" r="2.6"/><circle cx="769" cy="422" r="2"/></g>
        <g stroke="#35518f" fill="none"><path d="M769.500 298V314" stroke-width="1.5"/><path d="M813 342L824 321" stroke-width="2"/><path d="M801 340l9-14 5 4-8 12z" fill="#2f4678" stroke="#2f4678"/><path d="M848 332l6 12" stroke-width="2"/></g>
        <circle cx="691" cy="427" r="21" fill="#2a3bc4"/>
        <circle cx="691" cy="427" r="4" fill="none" stroke="#38b0f0" stroke-width="2"/>
        <path d="M696 428l3 6 0-5 2 1 0 3 2-1 3 2 2 2-1 5-4 3-5-2-3-6-1-4 2 0z" fill="#fff" stroke="#222" stroke-width=".6"/>
        <g>
          <rect x="249" y="591" width="19" height="19" fill="#b4b4b4"/>
          <path d="M250 591V575" stroke="#2e8a42" stroke-width="2"/>
          <path d="M250 610H283" stroke="#a83a3a" stroke-width="2"/>
          <circle cx="249" cy="610" r="3" fill="#3a55c8"/>
        </g>
      </svg>
      <div class="blurlabel"></div><span class="labelone">1</span>
      <div class="logo">
        <svg class="lgsvg" viewBox="0 0 60 56">
          <circle cx="17" cy="11" r="5.500" fill="#ee7a1f"/>
          <path d="M30 2q-2 2 0 5 13 9 7 24-3 6-9 9 18 2 21-1-5-1-8-5 9-12 5-24-4-6-16-8z" fill="#1f88c8"/>
          <path d="M10 22q-7 12 2 20 8 6 16 0-12 0-13-10 0-8 7-13-7-2-12 3z" fill="#173f9c"/>
          <path d="M28 17q-7 8-3 19l5-1q-3-9-2-18z" fill="#173f9c"/>
          <path d="M30 18q5 7 2 16l-3 1q1-8 1-17z" fill="#1f88c8"/>
          <path d="M12 45q10-4 18 0t18 0q-9 7-18 3t-18-3zM16 50q8-2 14 1t12 0q-7 5-14 2t-12-3z" fill="#173f9c"/>
        </svg>
        <div class="lgcn">千言教育</div>
        <div class="lgen">QIANYAN EDUCATION</div>
      </div>
      <div class="subs"><div>没有激流则谈不上勇进，</div><div class="sub2">没有山峰则谈不上攀登。</div></div>
    </div>

    <div class="rightbar">
      <svg class="i t5"><use href="#lbx"/></svg><svg class="i t4"><use href="#r1"/></svg><svg class="i t1"><use href="#r2"/></svg><svg class="i t2"><use href="#r3"/></svg><svg class="i t2"><use href="#r4"/></svg><svg class="i t2"><use href="#r5"/></svg><svg class="i t3"><use href="#r6"/></svg><svg class="i t2"><use href="#r7"/></svg>
      <div class="more t1"><b class="c"></b></div>
      <svg class="i t11"><use href="#r8"/></svg><svg class="i t6"><use href="#r9"/></svg><svg class="i t7"><use href="#r10"/></svg><svg class="i t2"><use href="#r7"/></svg>
      <div class="more t1"><b class="c"></b></div>
    </div>

    <div class="panel">
      <div class="ptitle"><i class="pcb"></i><span>部件导航器</span></div>
      <div class="tree">
        <div class="thead"><span class="tn">名称</span><i class="tup"></i><span class="tl">最</span></div>
        <div class="list">
          <div class="row"><i class="ex none"></i><svg class="ti"><use href="#clk"/></svg><span class="rt">历史记录模式</span></div>
          <div class="row"><i class="ex">+</i><svg class="ti"><use href="#mdv"/></svg><span class="rt">模型视图</span></div>
          <div class="row"><i class="ex">+</i><svg class="ti"><use href="#chk"/></svg><svg class="ti"><use href="#cam"/></svg><span class="rt nar">摄像机</span></div>
          <div class="row"><i class="ex none"></i><svg class="ti"><use href="#fld"/></svg><span class="rt">用户表达式</span></div>
          <div class="row"><i class="ex">−</i><svg class="ti"><use href="#fld"/></svg><span class="rt">模型历史记录</span></div>
          <div class="row"><i class="ind"></i><svg class="ti10"><use href="#cbx"/></svg><svg class="ti"><use href="#skg"/></svg><span class="rt skt">草图 (0) "SKET...</span><svg class="ti rc"><use href="#chk"/></svg></div>
        </div>
        <div class="hs"><span class="ha">‹</span><i class="thumb"></i><span class="hb">›</span></div>
      </div>
      <div class="grip"></div>
      <div class="acc"><span>相依性</span><i class="ch"></i></div>
      <div class="acc"><span>细节</span><i class="ch"></i></div>
      <div class="acc"><span>预览</span><i class="ch"></i></div>
    </div>

    <div class="tabs">
      <div class="gear"><span>⚙</span></div>
      <div class="tab t10"><svg class="i"><use href="#tb1"/></svg></div>
      <div class="tab t2"><svg class="i"><use href="#tb2"/></svg></div>
      <div class="tab t3"><svg class="i"><use href="#tb3"/></svg></div>
      <div class="tab t2"><svg class="i"><use href="#tb4"/></svg></div>
      <div class="tab t11"><svg class="i"><use href="#tb5"/></svg></div>
      <div class="tab t9"><svg class="i"><use href="#tb6"/></svg></div>
      <div class="tab t10"><svg class="i"><use href="#tb7"/></svg></div>
      <div class="tab t2"><svg class="i"><use href="#tb8"/></svg></div>
      <div class="tab t2"><svg class="i"><use href="#tb9"/></svg></div>
      <div class="tab t2"><svg class="i"><use href="#tba"/></svg></div>
      <div class="tab t2"><svg class="i"><use href="#tbb"/></svg></div>
      <div class="tab t2"><svg class="i"><use href="#tbc"/></svg></div>
    </div>
  </div>

  <div class="bottom">
    <div class="tb b1"><div class="strip s4">
      <svg class="i m10"><use href="#t1"/></svg><svg class="i m1"><use href="#t2"/></svg><svg class="i m4"><use href="#t3"/></svg><svg class="i"><use href="#al"/></svg><svg class="i m2"><use href="#ar"/></svg><svg class="i m3"><use href="#pen"/></svg><svg class="i m4"><use href="#cop"/></svg><svg class="i"><use href="#sta"/></svg><svg class="i"><use href="#hs2"/></svg><svg class="i m4"><use href="#pur"/></svg><svg class="i m3"><use href="#hks"/></svg><svg class="i"><use href="#rhm"/></svg><svg class="i m1"><use href="#lmp"/></svg><svg class="i m5"><use href="#ytb"/></svg><svg class="i m1"><use href="#tub"/></svg><svg class="i m2"><use href="#tub"/></svg><svg class="i m3"><use href="#red"/></svg><svg class="i m2"><use href="#pnk"/></svg><svg class="i m2"><use href="#box"/></svg><svg class="i m3"><use href="#box"/></svg><svg class="i m1"><use href="#sq"/></svg><b class="c m2"></b><svg class="i m1"><use href="#hex"/></svg><b class="c m2"></b><svg class="i"><use href="#axs"/></svg><svg class="i m1"><use href="#rcr"/></svg><svg class="i m3"><use href="#ora"/></svg><svg class="i m2"><use href="#tre"/></svg><svg class="i m4"><use href="#pks"/></svg><svg class="i"><use href="#flg"/></svg><svg class="i m2"><use href="#cir"/></svg><b class="c m2"></b>
    </div></div>
    <div class="tb b2"><div class="strip s4">
      <svg class="i m9"><use href="#skt"/></svg><svg class="i m3"><use href="#flag"/></svg><span class="lbl w34 m2">完成草图</span><svg class="i m4"><use href="#wav"/></svg><svg class="i m1"><use href="#ln"/></svg><svg class="i m2"><use href="#arc"/></svg><svg class="i m2"><use href="#cir"/></svg><svg class="i m3"><use href="#ang"/></svg><svg class="i m2"><use href="#ang2"/></svg><svg class="i m1"><use href="#rct"/></svg><svg class="i m3"><use href="#spl"/></svg><svg class="i m2"><use href="#pls"/></svg><svg class="i m1"><use href="#hrt"/></svg><b class="c m2"></b><svg class="i m1"><use href="#tft"/></svg><svg class="i m3"><use href="#cyr"/></svg><svg class="i m6"><use href="#trm"/></svg><svg class="i m3"><use href="#tr3"/></svg><svg class="i"><use href="#tr2"/></svg><svg class="i m8"><use href="#ora2"/></svg><b class="c m1"></b><svg class="i m4"><use href="#prl"/></svg><svg class="i m2"><use href="#col"/></svg><svg class="i m4 sel"><use href="#par"/></svg><b class="c m2"></b><svg class="i m3"><use href="#xpr"/></svg><svg class="i"><use href="#yel"/></svg><svg class="i m2"><use href="#rbl"/></svg><svg class="i m5"><use href="#lnk"/></svg><svg class="i"><use href="#gr1"/></svg><svg class="i m3"><use href="#gr2"/></svg><b class="c m3"></b>
    </div></div>
    <div class="status"><i class="st1"></i><i class="st2"></i></div>
  </div>
</div>
</body>
</html>
```
FILE: styles.css
```css
* { box-sizing: border-box; }
html, body { margin: 0; height: 720px; overflow: hidden; background: #000; }
body { font-family: "Noto Sans CJK SC", "Liberation Sans", sans-serif; color: #333; }
.sprite { width: 0; height: 0; display: block; overflow: hidden; }
.app { width: 934px; height: 718px; margin-left: 173px; display: flex; flex-direction: column; }

.topedge { height: 4px; display: flex; justify-content: flex-end; gap: 2px; padding-right: 4px; align-items: flex-start; background: #050505; }
.peek { width: 12px; height: 3px; background: #8c8c8c; }
.peek.hot { background: #c8583c; }

.menu { height: 17px; flex: none; display: flex; align-items: center; font-size: 9px; color: #3a3a3a; background: #ececec; filter: blur(.45px); border-bottom: 1px solid #d8d8d8; }
.mlogo { width: 14px; height: 14px; margin: 0 3px 0 4px; flex: none; }
.mi { flex: none; white-space: nowrap; }
.ver { font-size: 8px; }
.w37 { width: 37px; } .w38 { width: 38px; } .w39 { width: 39px; } .w40 { width: 40px; } .w44 { width: 44px; } .w47 { width: 47px; } .w65 { width: 65px; }
.winbtns { margin-left: auto; margin-right: 3px; display: flex; gap: 3px; }
.wb { width: 11px; height: 12px; font-size: 8px; line-height: 11px; text-align: center; border: 1px solid #8a8a8a; background: #f2f2f2; border-radius: 2px; color: #444; }

.tb { display: flex; align-items: center; flex: none; filter: blur(.55px) saturate(.85); background: #d2d2d2; }
.r1 { height: 24px; } .r2 { height: 25px; } .r3 { height: 25px; } .r4 { height: 20px; background: #dcdcdc; border-top: 1px solid #bdbdbd; border-bottom: 3px solid #a8a8a8; }
.strip { height: 100%; display: flex; align-items: center; background: #dcdcdc; }
.s1 { width: 812px; } .s2 { width: 664px; } .s3 { width: 760px; } .s4 { width: 700px; background: transparent; }
.i { width: 20px; height: 20px; flex: none; }
.t { width: 16px; height: 16px; flex: none; }
.t.bx, .i.sel { background: #f6f6f6; outline: 1px solid #888; outline-offset: -1px; }
.c { width: 8px; height: 8px; flex: none; display: block; background: radial-gradient(circle at 50% 60%, #222 0 1.4px, transparent 1.8px); }
.sep { width: 2px; height: 20px; flex: none; display: block; background: repeating-linear-gradient(#b4b4b4 0 1px, #eee 1px 3px); }
.lbl { font-size: 9px; flex: none; white-space: nowrap; color: #333; }
.w20 { width: 20px; } .w34 { width: 34px; }
.gi { width: 20px; height: 20px; flex: none; display: flex; flex-direction: column; align-items: center; justify-content: center; overflow: hidden; }
.gA { font: bold 18px/20px "Liberation Serif", serif; color: #222; }
.gIcam { font: bold 5px/18px "Liberation Sans", sans-serif; color: #ffe0c0; background: #f07010; height: 18px; }
.gName { font-size: 15px; line-height: 20px; font-weight: 900; color: #1a2cb0; }
.gInch { font: bold 6px/7px "Liberation Sans", sans-serif; }
.gInch .in { color: #c02040; border-bottom: 2px solid #d03050; padding-bottom: 1px; }
.gInch .mm { color: #2030a0; font-size: 7px; line-height: 9px; }
.gBits { font: bold 9px/9px "Liberation Sans", sans-serif; color: #3040c0; }
.m0 { margin-left: 0; } .m1 { margin-left: 1px; } .m2 { margin-left: 2px; } .m3 { margin-left: 3px; } .m4 { margin-left: 4px; } .m5 { margin-left: 5px; } .m6 { margin-left: 6px; } .m7 { margin-left: 7px; } .m8 { margin-left: 8px; } .m9 { margin-left: 9px; } .m10 { margin-left: 10px; }
.t1 { margin-top: 1px; } .t2 { margin-top: 2px; } .t3 { margin-top: 3px; } .t4 { margin-top: 4px; } .t5 { margin-top: 5px; } .t6 { margin-top: 6px; } .t7 { margin-top: 7px; } .t8 { margin-top: 8px; } .t9 { margin-top: 9px; } .t10 { margin-top: 10px; } .t11 { margin-top: 11px; } .t22 { margin-top: 22px; }

.find { width: 80px; height: 16px; background: #f4f4f4; display: flex; align-items: center; justify-content: space-between; padding: 0 1px 0 2px; font-size: 9px; color: #a8a8a8; flex: none; }
.fm { width: 14px; height: 14px; }
.combo { height: 13px; background: #fafafa; display: flex; align-items: center; justify-content: space-between; font-size: 9px; color: #333; flex: none; white-space: nowrap; }
.cw1 { width: 82px; } .cw2 { width: 87px; }
.dd { width: 13px; height: 11px; background: linear-gradient(#9db4d8, #6d88b8); border: 1px solid #556; display: flex; align-items: center; justify-content: center; }
.dd::after { content: ""; border: 3px solid transparent; border-top: 4px solid #10204a; margin-top: 3px; }
.endc { margin-left: auto; margin-right: 2px; }

.main { height: 540px; flex: none; display: flex; background: #d8d8d8; }
.leftbar { width: 34px; flex: none; background: #dadada; display: flex; flex-direction: column; align-items: center; border-left: 2px solid #efefef; border-right: 1px solid #c0c0c0; filter: blur(.55px) saturate(.85); padding-right: 2px; }
.more { height: 8px; width: 24px; display: flex; justify-content: space-between; align-items: center; flex: none; font-size: 9px; line-height: 8px; font-weight: bold; }
.more span { transform: rotate(90deg); }
.canvas { width: 673px; flex: none; background: #333; position: relative; overflow: hidden; }
.scene { width: 673px; height: 540px; display: block; filter: blur(.3px); }
.blurlabel { position: absolute; left: 0; top: 4px; width: 210px; height: 18px; background: linear-gradient(90deg, #454545, #5e5e5e 50%, #6e6e6e); filter: blur(1.5px); }
.labelone { position: absolute; left: 211px; top: 2px; color: #e6e6e6; font: 14px/20px "Liberation Sans", sans-serif; }
.logo { position: absolute; left: 96px; top: 453px; width: 98px; height: 87px; background: #fff; display: flex; flex-direction: column; align-items: center; filter: blur(.35px); }
.lgsvg { width: 54px; height: 50px; flex: none; margin-top: 1px; }
.lgcn { font-size: 17px; line-height: 20px; margin: 2px 0 0 3px; letter-spacing: .2px; color: #222; white-space: nowrap; }
.lgen { font: bold 6.500px/8px "Liberation Sans", sans-serif; margin: 1px 0 0 3px; color: #333; white-space: nowrap; }
.subs { position: absolute; left: 226px; top: 485px; color: #f0f0f0; font-size: 18px; line-height: 24px; letter-spacing: 2.4px; white-space: nowrap; filter: blur(.3px); }
.sub2 { margin-left: 148px; }

.rightbar { width: 33px; flex: none; background: #dcdcdc; display: flex; flex-direction: column; align-items: center; border-left: 1px solid #c8c8c8; filter: blur(.55px) saturate(.85); }
.panel { width: 172px; flex: none; height: 538px; background: #eeeeee; padding: 0 5px 0 7px; display: flex; flex-direction: column; border-left: 1px solid #c4c4c4; filter: blur(.35px); }
.ptitle { height: 22px; flex: none; display: flex; align-items: center; font-size: 9px; font-weight: bold; color: #222; padding-left: 2px; }
.pcb { width: 10px; height: 10px; border: 1.500px solid #333; background: #f4f4f4; margin-right: 8px; }
.tree { height: 456px; flex: none; border: 1px solid #a0a0a0; background: #fff; display: flex; flex-direction: column; }
.thead { height: 11px; flex: none; display: flex; align-items: center; font-size: 9px; background: linear-gradient(#f8f8f8, #e0e0e0); color: #333; padding-left: 4px; border-bottom: 1px solid #c8c8c8; }
.tn { width: 24px; }
.tup { width: 0; height: 0; border: 4px solid transparent; border-bottom: 4px solid #222; margin: -4px 0 0 3px; }
.tl { margin-left: auto; padding-right: 1px; }
.list { flex: 1; background: repeating-linear-gradient(#ffffff 0 14.4px, #f8f8f8 14.4px 28.8px); }
.row { height: 14.4px; padding-bottom: 2px; display: flex; align-items: center; font-size: 8.500px; color: #444; white-space: nowrap; }
.ex { width: 12px; height: 12px; flex: none; font-style: normal; font-size: 8px; line-height: 12px; text-align: center; color: #666; }
.ti { width: 12px; height: 12px; flex: none; }
.ti10 { width: 10px; height: 12px; flex: none; }
.ind { width: 28px; flex: none; }
.rt { margin-left: 2px; }
.rt.nar { margin-left: 0; }
.skt { margin-left: 1px; font-weight: bold; letter-spacing: .6px; }
.rc { margin-left: auto; margin-right: 2px; }
.hs { height: 14px; flex: none; display: flex; align-items: center; background: #f2f2f2; padding: 0 4px; font-size: 11px; font-weight: bold; color: #555; }
.thumb { width: 75px; height: 11px; background: #cdcdcd; margin-left: 4px; }
.hb { margin-left: auto; }
.grip { height: 8px; flex: none; width: 27px; margin: 0 0 0 67px; display: flex; align-items: center; background: linear-gradient(transparent 2px, #cfcfcf 2px 5px, transparent 5px); }
.acc { height: 16px; flex: none; width: 160px; display: flex; align-items: center; justify-content: space-between; background: linear-gradient(#fafafa, #d8d8d8); font-size: 9px; font-weight: bold; color: #222; padding: 0 3px 0 4px; border-bottom: 1px solid #bdbdbd; }
.ch { width: 8px; height: 8px; border-right: 2px solid #777; border-bottom: 2px solid #777; transform: rotate(45deg) translate(-1px, -1px); margin-right: 3px; }
.tabs { width: 22px; flex: none; background: #ababab; display: flex; flex-direction: column; align-items: flex-start; filter: blur(.55px) saturate(.85); }
.gear { width: 22px; height: 21px; flex: none; background: #d8d8d8; font: 13px/21px "DejaVu Sans", sans-serif; text-align: center; color: #444; }
.tab { width: 18px; height: 28px; flex: none; margin-left: 1px; background: #d6d6d6; display: flex; align-items: center; justify-content: center; }

.bottom { flex: 1; display: flex; flex-direction: column; background: #dcdcdc; }
.b1 { height: 25px; background: linear-gradient(#e0e0e0, #d9d9d9); }
.b2 { height: 23px; background: linear-gradient(#d9d9d9, #d6d6d6); }
.status { flex: 1; display: flex; justify-content: flex-end; align-items: center; gap: 3px; padding-right: 38px; background: #e6e6e6; border-top: 1px solid #f2f2f2; filter: blur(.35px); }
.st1 { width: 13px; height: 13px; background: linear-gradient(135deg, #40342c 30%, #2f9ad8 30%); }
.st2 { width: 11px; height: 12px; background: #b8c4d0; border: 1px solid #889; }
```
